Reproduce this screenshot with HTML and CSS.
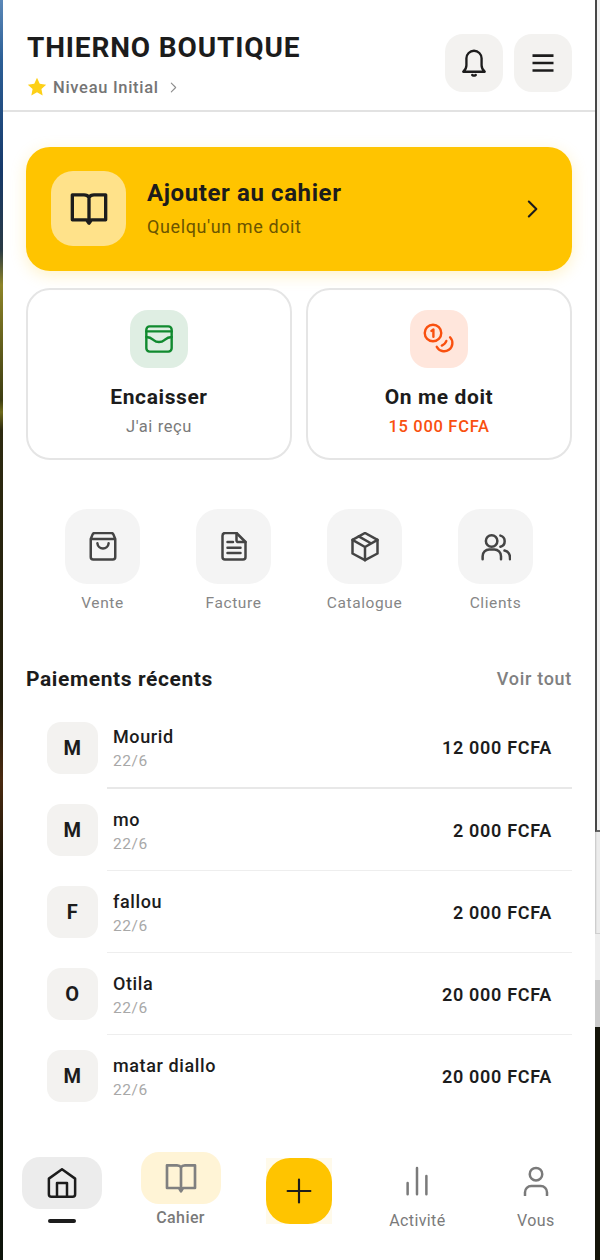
FILE: index.html
```html
<!DOCTYPE html>
<html lang="fr">
<head>
    <meta charset="UTF-8">
    <meta name="viewport" content="width=device-width, initial-scale=1.0">
    <title>Thierno Boutique</title>
    <link rel="stylesheet" href="styles.css">
</head>
<body>
    <div class="desktop-left"></div>
    <main class="app">
        <header class="topbar">
            <div class="shop">
                <h1>THIERNO BOUTIQUE</h1>
                <div class="level">
                    <svg class="star" viewBox="0 0 24 24"><path d="M12 1l3.3 7.2 7.7 1-5.700 5.300 1.500 7.700L12 18.300l-6.800 3.900 1.500-7.700L1 9.200l7.700-1z"/></svg>
                    <span>Niveau Initial</span>
                    <svg class="level-arrow" viewBox="0 0 24 24"><path d="M8 4l8 8-8 8"/></svg>
                </div>
            </div>
            <div class="top-actions">
                <button class="top-btn">
                    <svg class="bell" viewBox="0 0 24 24"><path d="M2.800 19.500h18.400c-1.700-1.400-2.700-3-2.700-5.500V8a6.500 6.500 0 0 0-13 0v6c0 2.500-1 4.100-2.700 5.500z"/><path d="M10.500 22.300c1 .7 2 .7 3 0"/></svg>
                </button>
                <button class="top-btn">
                    <svg class="burger" viewBox="0 0 24 24"><path d="M3 5.600h18M3 12h18M3 18.400h18"/></svg>
                </button>
            </div>
        </header>

        <section class="content">
            <a class="hero">
                <span class="hero-icon">
                    <svg viewBox="0 0 24 24"><path d="M2 3.500h7c1.400 0 2.400.5 3 1.500.6-1 1.600-1.500 3-1.500h7v15h-8.500L12 20.500l-1.500-2H2zM12 5v13.500"/></svg>
                </span>
                <span class="hero-text">
                    <strong>Ajouter au cahier</strong>
                    <small>Quelqu'un me doit</small>
                </span>
                <svg class="hero-arrow" viewBox="0 0 24 24"><path d="M7 3l9 9-9 9"/></svg>
            </a>

            <div class="cards">
                <div class="card">
                    <span class="card-icon green">
                        <svg viewBox="0 0 24 24"><rect x="2.500" y="2.500" width="19" height="19" rx="2.500"/><path d="M2.500 6.300h19"/><path d="M2.500 10.500c3 0 4 1 5.500 2.300 2.200 1.900 5.800 1.900 8 0 1.500-1.300 2.500-2.300 5.500-2.300"/></svg>
                    </span>
                    <strong>Encaisser</strong>
                    <small>J'ai reçu</small>
                </div>
                <div class="card">
                    <span class="card-icon orange">
                        <svg viewBox="0 0 24 24"><circle cx="7.500" cy="7.500" r="6.200"/><path d="M6.300 5.900l1.500-1.100v5.500"/><path d="M20.300 10.700a6.200 6.200 0 1 1-10 7.100"/><path d="M17.500 13.500c-.4 1.400-1.600 2.600-3.400 3.400"/></svg>
                    </span>
                    <strong>On me doit</strong>
                    <small class="due">15 000 FCFA</small>
                </div>
            </div>

            <div class="shortcuts">
                <div class="shortcut">
                    <span class="shortcut-icon">
                        <svg viewBox="0 0 24 24"><path d="M5.500 .8h13c.9 0 1.600.5 1.900 1.300l1.400 3.500V20a2 2 0 0 1-2 2H4.200a2 2 0 0 1-2-2V5.600l1.400-3.500C3.900 1.300 4.600.8 5.500.8zM2.200 5.600h19.600"/><path d="M7.500 9c.5 5.500 8.500 5.500 9 0"/></svg>
                    </span>
                    <span class="shortcut-label">Vente</span>
                </div>
                <div class="shortcut">
                    <span class="shortcut-icon">
                        <svg viewBox="0 0 24 24"><path d="M14 .8H5a2.200 2.200 0 0 0-2.200 2.200v17a2 2 0 0 0 2 2h14.400a2 2 0 0 0 2-2V8z"/><path d="M14 1v5.500A1.500 1.500 0 0 0 15.500 8h5.700"/><path d="M6.800 8h4.400M6.800 12.500h10.400M6.800 16.800h10.400"/></svg>
                    </span>
                    <span class="shortcut-label">Facture</span>
                </div>
                <div class="shortcut">
                    <span class="shortcut-icon">
                        <svg viewBox="0 0 24 24"><path d="M12 .8l10 5.500v10.900l-10 5.300-10-5.300V6.300z"/><path d="M2 6.300l10 5.700 10-5.700M12 12v10.500M7 3.500l10 5.700"/></svg>
                    </span>
                    <span class="shortcut-label">Catalogue</span>
                </div>
                <div class="shortcut">
                    <span class="shortcut-icon">
                        <svg viewBox="0 0 24 24"><circle cx="8.500" cy="7.200" r="4.600"/><path d="M1.300 21.800v-2.500a5.300 5.300 0 0 1 5.300-5.300h4.100a5.300 5.300 0 0 1 5.300 5.300v2.500"/><path d="M15.500 2.900a4.600 4.600 0 0 1 0 8.900"/><path d="M18.800 14.800c2.700.7 4.400 3 4.400 5.700v1.300"/></svg>
                    </span>
                    <span class="shortcut-label">Clients</span>
                </div>
            </div>

            <div class="recent-head">
                <h2>Paiements récents</h2>
                <span>Voir tout</span>
            </div>

            <ul class="payments">
                <li class="payment first">
                    <span class="avatar">M</span>
                    <div class="payment-row">
                        <div class="payment-info"><b>Mourid</b><time>22/6</time></div>
                        <span class="amount">12 000 FCFA</span>
                    </div>
                </li>
                <li class="payment">
                    <span class="avatar">M</span>
                    <div class="payment-row">
                        <div class="payment-info"><b>mo</b><time>22/6</time></div>
                        <span class="amount">2 000 FCFA</span>
                    </div>
                </li>
                <li class="payment">
                    <span class="avatar">F</span>
                    <div class="payment-row">
                        <div class="payment-info"><b>fallou</b><time>22/6</time></div>
                        <span class="amount">2 000 FCFA</span>
                    </div>
                </li>
                <li class="payment">
                    <span class="avatar">O</span>
                    <div class="payment-row">
                        <div class="payment-info"><b>Otila</b><time>22/6</time></div>
                        <span class="amount">20 000 FCFA</span>
                    </div>
                </li>
                <li class="payment">
                    <span class="avatar">M</span>
                    <div class="payment-row">
                        <div class="payment-info"><b>matar diallo</b><time>22/6</time></div>
                        <span class="amount">20 000 FCFA</span>
                    </div>
                </li>
            </ul>
        </section>

        <nav class="tabbar">
            <div class="tab home">
                <span class="tab-pill">
                    <svg viewBox="0 0 24 24"><path d="M1.500 21V8.500L12 1l10.500 7.500V21a2 2 0 0 1-2 2h-17a2 2 0 0 1-2-2z"/><path d="M8 23V12h8v11"/></svg>
                </span>
                <span class="tab-mark"></span>
            </div>
            <div class="tab book">
                <span class="tab-pill">
                    <svg viewBox="0 0 24 24"><path d="M1.500 2.500H9c1.400 0 2.400.5 3 1.500.6-1 1.600-1.500 3-1.500h7.500v17h-9L12 22l-1.500-2.500h-9zM12 4v15.500"/></svg>
                </span>
                <span class="tab-label">Cahier</span>
            </div>
            <div class="tab add">
                <button class="add-btn">
                    <span class="add-core">
                        <svg viewBox="0 0 24 24"><path d="M12 1.500v21M1.500 12h21"/></svg>
                    </span>
                </button>
            </div>
            <div class="tab plain">
                <svg viewBox="0 0 24 24"><path d="M4.500 13.500v9M12 1.500v21M19.500 8v14.500"/></svg>
                <span class="tab-label">Activité</span>
            </div>
            <div class="tab plain">
                <svg viewBox="0 0 24 24"><circle cx="12" cy="6.500" r="5"/><path d="M3.200 23.500v-2.500a5 5 0 0 1 5-5h7.600a5 5 0 0 1 5 5v2.500"/></svg>
                <span class="tab-label">Vous</span>
            </div>
        </nav>
    </main>
    <div class="desktop-right">
        <div class="strip-frame"></div>
        <div class="strip-grey"></div>
        <div class="strip-light"></div>
        <div class="strip-mid"></div>
        <div class="strip-dark"></div>
    </div>
</body>
</html>
```

FILE: styles.css
```css
* {
    box-sizing: border-box;
}

body {
    margin: 0;
    display: flex;
    height: 1260px;
    overflow: hidden;
    font-family: Roboto, "Liberation Sans", sans-serif;
    letter-spacing: .6px;
    color: #1c1c1c;
    background: #fff;
}

svg {
    fill: none;
    stroke: currentColor;
    stroke-linecap: round;
    stroke-linejoin: round;
    stroke-width: 2;
}

button {
    border: 0;
    padding: 0;
    font: inherit;
    color: inherit;
}

/* thin slices of the desktop either side of the app */
.desktop-left {
    width: 3px;
    flex: none;
    background: linear-gradient(180deg, #5b88b8 0, #2c5f96 60px, #16396a 170px, #2a3a44 250px, #8d8428 285px, #3d3d12 400px, #6e6a1c 412px, #2d2a10 430px, #211d0c 700px, #4a2a10 780px, #131208 880px, #0d140a 1260px);
}

.desktop-right {
    width: 5px;
    flex: none;
    display: flex;
    flex-direction: column;
}

.strip-frame {
    height: 832px;
    background: #f1f1f1;
    border-left: 2px solid #484848;
    border-bottom: 2px solid #666;
}

.strip-grey {
    height: 101px;
    background: linear-gradient(90deg, #c4c4c4, #ececec 40%);
}

.strip-light {
    height: 47px;
    background: #eeeeee;
    border-top: 1px solid #cfcfcf;
}

.strip-mid {
    height: 47px;
    background: #cbcbcb;
}

.strip-dark {
    flex: 1;
    background: #14140a;
}

.app {
    flex: 1;
    min-width: 0;
    display: flex;
    flex-direction: column;
    background: #fff;
}

/* header */
.topbar {
    height: 112px;
    flex: none;
    padding: 34px 23px 0 24px;
    display: flex;
    justify-content: space-between;
    border-bottom: 2px solid #e2e2e2;
}

.shop h1 {
    margin: 0;
    font-size: 28px;
    line-height: 28px;
    font-weight: 700;
    letter-spacing: .85px;
}

.level {
    margin-top: 15px;
    display: flex;
    align-items: center;
    color: #757575;
    font-size: 16.5px;
    font-weight: 500;
    letter-spacing: .7px;
}

.star {
    width: 20px;
    height: 20px;
    margin-right: 6px;
    fill: #fdd017;
    stroke: none;
}

.level-arrow {
    width: 13px;
    height: 13px;
    margin-left: 8px;
    stroke: #8c8c8c;
}

.top-actions {
    display: flex;
    gap: 11px;
}

.top-btn {
    width: 58px;
    height: 58px;
    border-radius: 18px;
    background: #f3f2f0;
    display: flex;
    align-items: center;
    justify-content: center;
}

.top-btn svg {
    width: 28px;
    height: 28px;
}

.top-btn .burger {
    stroke-width: 2.3;
    stroke-linecap: butt;
}

/* main area */
.content {
    flex: 1;
    min-height: 0;
    padding: 35px 23px 0 23px;
    display: flex;
    flex-direction: column;
}

.hero {
    height: 124px;
    flex: none;
    border-radius: 24px;
    padding: 0 29px 0 25px;
    background: #ffc400;
    box-shadow: 0 4px 16px rgba(255, 196, 0, .22);
    display: flex;
    align-items: center;
}

.hero-icon {
    width: 75px;
    height: 75px;
    margin-top: -1px;
    border-radius: 22px;
    background: #ffe28a;
    display: flex;
    align-items: center;
    justify-content: center;
}

.hero-icon svg {
    width: 40px;
    height: 40px;
}

.hero-text {
    margin-left: 21px;
    padding-bottom: 2px;
    flex: 1;
    display: flex;
    flex-direction: column;
}

.hero-text strong {
    font-size: 24px;
    line-height: 30px;
    font-weight: 700;
}

.hero-text small {
    margin-top: 8px;
    font-size: 18px;
    line-height: 22px;
    color: #6b5500;
}

.hero-arrow {
    width: 20px;
    height: 20px;
    stroke-width: 2.5;
}

.cards {
    margin-top: 17px;
    flex: none;
    display: grid;
    grid-template-columns: 1fr 1fr;
    gap: 14px;
}

.card {
    height: 172px;
    border: 2px solid #e5e5e5;
    border-radius: 24px;
    padding-top: 20px;
    display: flex;
    flex-direction: column;
    align-items: center;
}

.card-icon {
    width: 58px;
    height: 58px;
    border-radius: 18px;
    display: flex;
    align-items: center;
    justify-content: center;
}

.card-icon svg {
    width: 32px;
    height: 32px;
    stroke-width: 1.8;
}

.card-icon.green {
    background: #dfeee3;
    color: #118a2f;
}

.card-icon.orange {
    background: #ffe6dc;
    color: #f9500f;
}

.card strong {
    margin-top: 16px;
    font-size: 21px;
    line-height: 26px;
    font-weight: 700;
}

.card small {
    margin-top: 7px;
    font-size: 16.5px;
    line-height: 20px;
    color: #7a7a7a;
}

.card small.due {
    color: #f9500f;
    font-weight: 500;
    letter-spacing: .7px;
}

.shortcuts {
    margin-top: 49px;
    padding: 0 11px 0 11px;
    flex: none;
    display: grid;
    grid-template-columns: repeat(4, 1fr);
}

.shortcut {
    display: flex;
    flex-direction: column;
    align-items: center;
}

.shortcut-icon {
    width: 75px;
    height: 75px;
    border-radius: 22px;
    background: #f4f4f4;
    color: #444;
    display: flex;
    align-items: center;
    justify-content: center;
}

.shortcut-icon svg {
    width: 30px;
    height: 30px;
}

.shortcut-label {
    margin-top: 9px;
    font-size: 15.5px;
    line-height: 20px;
    color: #868686;
}

.recent-head {
    margin-top: 53px;
    flex: none;
    display: flex;
    justify-content: space-between;
    align-items: center;
}

.recent-head h2 {
    margin: 0;
    font-size: 21px;
    line-height: 26px;
    font-weight: 700;
}

.recent-head span {
    margin-bottom: 2px;
    font-size: 18px;
    font-weight: 500;
    color: #808080;
    letter-spacing: .7px;
}

/* payment list */
.payments {
    list-style: none;
    margin: 16px 0 0;
    padding: 0;
}

.payment {
    height: 82px;
    padding-left: 21px;
    display: flex;
    align-items: stretch;
}

.avatar {
    width: 51px;
    height: 52px;
    margin-top: 14px;
    border-radius: 14px;
    background: #f3f2f0;
    display: flex;
    align-items: center;
    justify-content: center;
    font-size: 20px;
    font-weight: 700;
}

.payment-row {
    flex: 1;
    margin: 0 0 1px 9px;
    padding: 0 20px 0 6px;
    border-bottom: 1px solid #eee;
    display: flex;
    align-items: center;
    justify-content: space-between;
}

.payment.first .payment-row {
    border-bottom: 2px solid #e8e8e8;
}

.payment:last-child .payment-row {
    border-bottom: 0;
}

.payment-info {
    padding-top: 2px;
    display: flex;
    flex-direction: column;
}

.payment-info b {
    font-size: 18px;
    line-height: 22px;
    font-weight: 500;
}

.payment-info time {
    margin-top: 3px;
    font-size: 15.5px;
    line-height: 20px;
    color: #a8a8a8;
}

.amount {
    font-size: 18px;
    font-weight: 600;
    letter-spacing: .7px;
}

/* bottom nav */
.tabbar {
    height: 142px;
    flex: none;
    display: grid;
    grid-template-columns: repeat(5, 1fr);
    align-items: start;
}

.tab {
    display: flex;
    flex-direction: column;
    align-items: center;
}

.tab svg {
    width: 30px;
    height: 30px;
}

.tab-pill {
    width: 80px;
    height: 52px;
    border-radius: 18px;
    display: flex;
    align-items: center;
    justify-content: center;
}

.home {
    margin-top: 39px;
}

.home .tab-pill {
    background: #ececec;
}

.tab-mark {
    width: 28px;
    height: 4px;
    margin-top: 10px;
    border-radius: 2px;
    background: #1c1c1c;
}

.book {
    margin-top: 34px;
}

.book .tab-pill {
    background: #fff4d6;
    color: #808080;
}

.book .tab-pill svg {
    width: 32px;
    height: 32px;
}

.tab-label {
    font-size: 16px;
    line-height: 20px;
    letter-spacing: .4px;
    color: #7a7a7a;
}

.book .tab-label {
    margin-top: 4px;
    font-weight: 500;
}

.add {
    margin-top: 40px;
}

.add-btn {
    width: 66px;
    height: 66px;
    background: #fffaea;
}

.add-core {
    height: 100%;
    border-radius: 24px;
    background: #ffc400;
    display: flex;
    align-items: center;
    justify-content: center;
}

.add-core svg {
    width: 26px;
    height: 26px;
}

.plain {
    margin-top: 48px;
    color: #7a7a7a;
}

.plain .tab-label {
    margin-top: 15px;
}
```
